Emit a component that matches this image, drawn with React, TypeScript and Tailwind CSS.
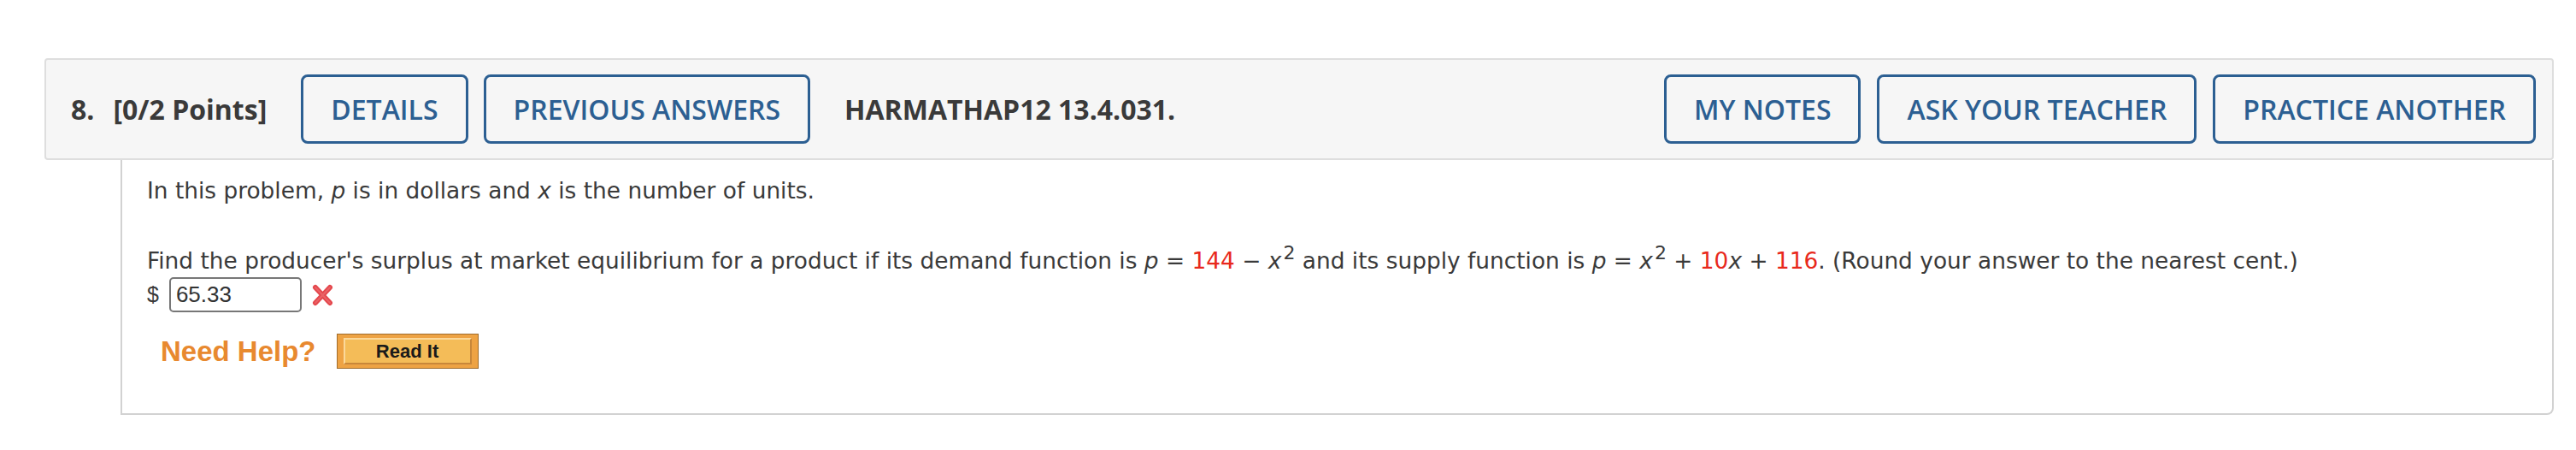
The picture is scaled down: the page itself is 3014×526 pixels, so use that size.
import React from 'react';

const openSans = { fontFamily: '"Open Sans", "Liberation Sans", sans-serif' };

function HeaderButton({ label }: { label: string }) {
  return (
    <button
      type="button"
      className="h-[81px] px-[32px] border-[3px] border-[#2c5f92] rounded-[8px] text-[32px] text-[#2c5f92] font-semibold bg-transparent leading-none whitespace-nowrap"
    >
      {label}
    </button>
  );
}

function RedX() {
  return (
    <svg width="27" height="26" viewBox="0 0 27 26" className="ml-[11px]">
      <path d="M5 4 L22 22 M22 4 L5 22" stroke="#e4474c" strokeWidth="6" strokeLinecap="round" />
      <path d="M5 4 L22 22 M22 4 L5 22" stroke="#ef7478" strokeWidth="2" strokeLinecap="round" opacity="0.6" />
    </svg>
  );
}

export default function App() {
  const red = 'text-[#e8291c]';
  return (
    <div className="min-h-[526px] bg-white pt-[68px] pl-[52px] pr-[26px]">
      {/* question header */}
      <div
        className="flex items-center h-[119px] bg-[#f6f6f6] border-2 border-[#dedede] rounded-[4px] pl-[29px] pr-[19px]"
        style={openSans}
      >
        <span className="text-[32px] font-bold text-[#3a3a3a]">8.</span>
        <span className="ml-[22px] text-[32px] font-bold text-[#3a3a3a]">[0/2 Points]</span>
        <div className="ml-[40px] flex gap-[18px]">
          <HeaderButton label="DETAILS" />
          <HeaderButton label="PREVIOUS ANSWERS" />
        </div>
        <span className="ml-[40px] text-[32px] font-bold text-[#3a3a3a]">HARMATHAP12 13.4.031.</span>
        <div className="ml-auto flex gap-[19px]">
          <HeaderButton label="MY NOTES" />
          <HeaderButton label="ASK YOUR TEACHER" />
          <HeaderButton label="PRACTICE ANOTHER" />
        </div>
      </div>

      {/* question body */}
      <div
        className="ml-[89px] border-l-2 border-r-2 border-b-2 border-[#d2d2d2] rounded-br-[8px] pl-[29px] pt-[18px] pb-[52px] text-[26.4px] text-[#3a3a3a]"
        style={{ fontFamily: '"DejaVu Sans", Verdana, sans-serif' }}
      >
        <p className="leading-[36px]">
          In this problem, <i>p</i> is in dollars and <i>x</i> is the number of units.
        </p>
        <p className="leading-[36px] mt-[46px] whitespace-nowrap">
          Find the producer's surplus at market equilibrium for a product if its demand function is <i>p</i> ={' '}
          <span className={red}>144</span> − <i>x</i>
          <sup className="text-[22px] ml-[2px] leading-none">2</sup> and its supply function is <i>p</i> = <i>x</i>
          <sup className="text-[22px] ml-[2px] leading-none">2</sup> + <span className={red}>10</span>
          <i>x</i> + <span className={red}>116</span>. (Round your answer to the nearest cent.)
        </p>
        <div className="mt-[1px] flex items-center" style={{ fontFamily: '"Liberation Sans", Arial, sans-serif' }}>
          <span className="text-[25px]">$</span>
          <div className="ml-[12px] w-[155px] h-[41px] border-2 border-[#777777] rounded-[5px] flex items-center pl-[6px] text-[26px] text-[#333333]">
            65.33
          </div>
          <RedX />
        </div>
        <div className="mt-[25px] flex items-center pl-[16px]" style={{ fontFamily: '"Liberation Sans", Arial, sans-serif' }}>
          <span className="text-[33px] font-bold text-[#e8892f] leading-none">Need Help?</span>
          <div className="ml-[24px] w-[166px] h-[41px] border border-[#a06c2c] bg-[#eea344] px-[7px] py-[4px]">
            <div className="h-full border-2 border-t-[#fbd89a] border-l-[#fbd89a] border-r-[#c8873a] border-b-[#c8873a] bg-[#f4bc58] flex items-center justify-center">
              <span className="text-[22px] font-bold text-[#1a1a1a] leading-none">Read It</span>
            </div>
          </div>
        </div>
      </div>
    </div>
  );
}
